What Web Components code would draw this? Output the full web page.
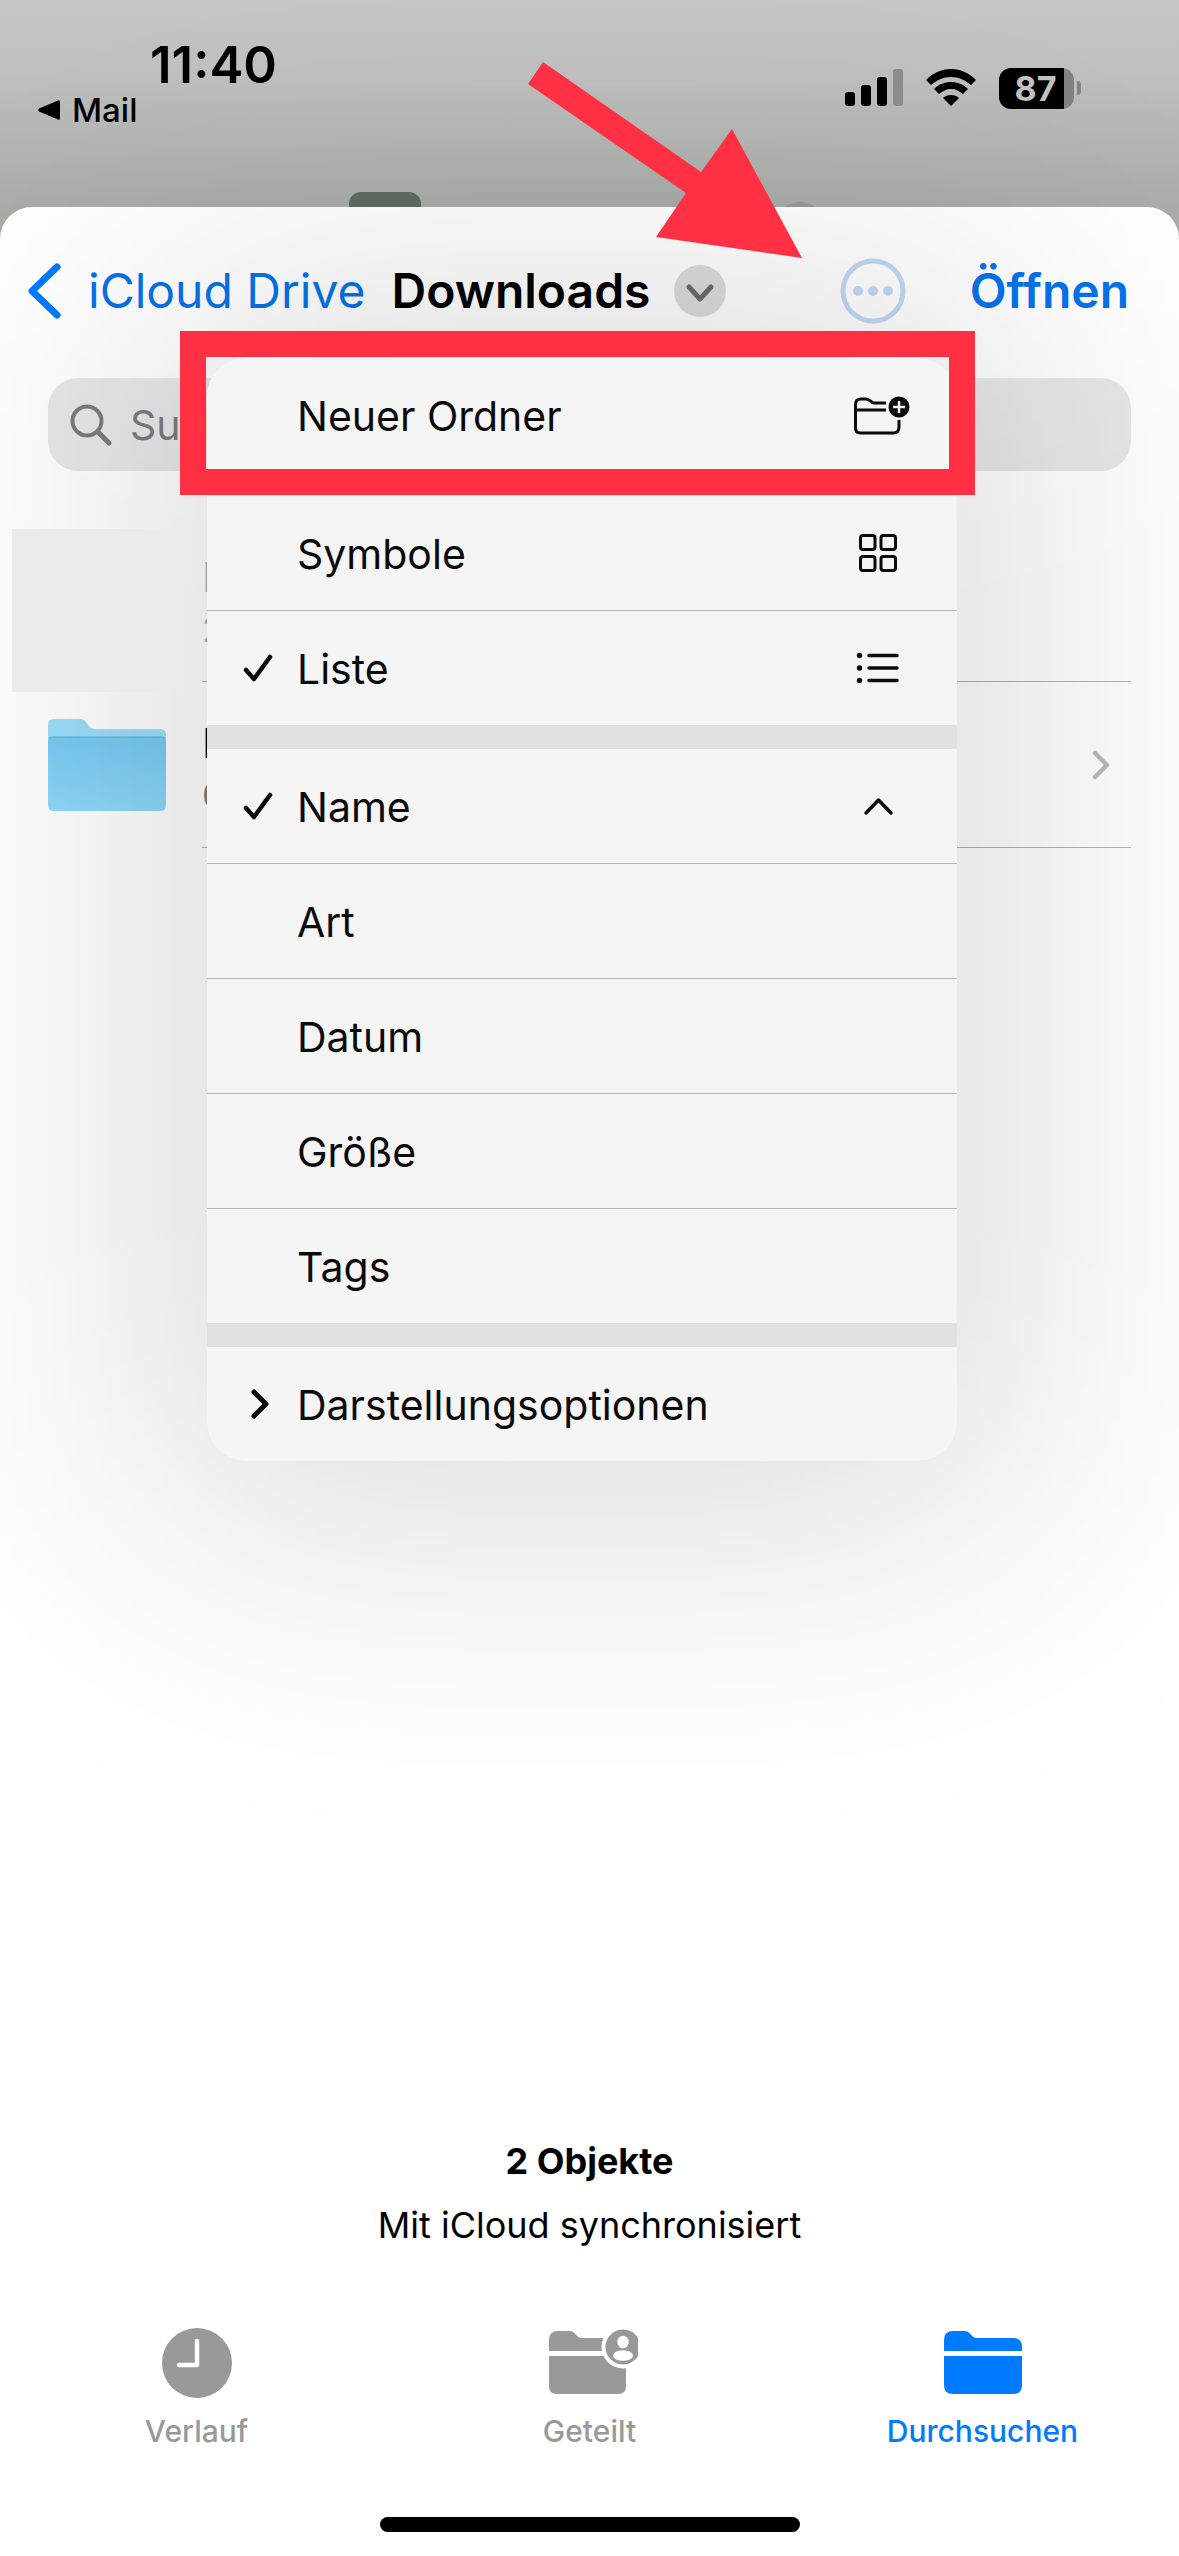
<!DOCTYPE html>
<html lang="de">
<head>
<meta charset="utf-8">
<meta name="viewport" content="width=device-width, initial-scale=1">
<title>Downloads</title>
<style>
  :root {
    --blue: #007aff;
    --link: #0573ea;
    --mark: #ff3044;
    --line: #b4b4b5;
    --gray: #999;
  }
  body { margin: 0; font-family: Inter, "Liberation Sans", sans-serif; color: #000; }
</style>
</head>
<body>
<files-screen></files-screen>

<script>
// Shared icon set, each one drawn in its own pixel grid.
const ICONS = {
  back: `<svg width="34" height="58" viewBox="0 0 34 58" fill="none" stroke="#007aff" stroke-width="7" stroke-linecap="round" stroke-linejoin="round"><path d="M29 5 4 29l25 24"/></svg>`,
  down: `<svg width="52" height="52" viewBox="0 0 52 52" fill="none"><circle cx="26" cy="26" r="26" fill="#dcdcdc"/><path d="M15 22l11 12 11-12" stroke="#6c6c6c" stroke-width="5" stroke-linecap="round" stroke-linejoin="round"/></svg>`,
  more: `<svg width="66" height="66" viewBox="0 0 66 66" fill="#c3d9f4"><circle cx="33" cy="33" r="30" fill="none" stroke="#c3d9f4" stroke-width="5"/><circle cx="18" cy="33" r="5"/><circle cx="33" cy="33" r="5"/><circle cx="48" cy="33" r="5"/></svg>`,
  search: `<svg width="42" height="42" viewBox="0 0 42 42" fill="none" stroke="#7c7c80" stroke-width="4" stroke-linecap="round"><circle cx="17" cy="17" r="14.5"/><path d="M28 28l11 11" stroke-width="5"/></svg>`,
  check: `<svg width="30" height="30" viewBox="0 0 30 30" fill="none" stroke="#0a0a0a" stroke-width="4.5" stroke-linecap="round" stroke-linejoin="round"><path d="M3 17l8 9L27 4"/></svg>`,
  right: `<svg width="30" height="34" viewBox="0 0 30 34" fill="none" stroke="#0a0a0a" stroke-width="5" stroke-linecap="round" stroke-linejoin="round"><path d="M11 5l12 12-12 12"/></svg>`,
  next: `<svg width="18" height="32" viewBox="0 0 18 32" fill="none" stroke="#bababb" stroke-width="4.5" stroke-linecap="round" stroke-linejoin="round"><path d="M3 4l12 12L3 28"/></svg>`,
  newFolder: `<svg width="62" height="42" viewBox="0 0 62 42" fill="none" stroke="#0a0a0a" stroke-width="3"><path d="M36 9H24c-3 0-4-4-8-4H11Q5.500 5 5.500 10.500V34q0 5 5 5H43q6 0 6-6V26"/><path d="M5 16H36"/><circle cx="49" cy="13" r="10.500" fill="#0a0a0a" stroke="none"/><path d="M49 7v12M43 13h12" stroke="#f5f5f5" stroke-width="2.500"/></svg>`,
  grid: `<svg width="62" height="42" viewBox="0 0 62 42" fill="none" stroke="#0a0a0a" stroke-width="3"><rect x="10.500" y="3.500" width="14.500" height="14" rx="2.500"/><rect x="31" y="3.500" width="14.500" height="14" rx="2.500"/><rect x="10.500" y="24.500" width="14.500" height="14" rx="2.500"/><rect x="31" y="24.500" width="14.500" height="14" rx="2.500"/></svg>`,
  list: `<svg width="62" height="42" viewBox="0 0 62 42" fill="#0a0a0a" stroke="#0a0a0a" stroke-width="3.500" stroke-linecap="round"><path d="M19 8.500h28M19 21h28M19 33.500h28"/><g stroke="none"><circle cx="9.500" cy="8.500" r="2.700"/><circle cx="9.500" cy="21" r="2.700"/><circle cx="9.500" cy="33.500" r="2.700"/></g></svg>`,
  up: `<svg width="62" height="42" viewBox="0 0 62 42" fill="none" stroke="#0a0a0a" stroke-width="3.500" stroke-linecap="round" stroke-linejoin="round"><path d="M16 28l12.500-13L41 28"/></svg>`,
  folder: `<svg width="118" height="92" viewBox="0 0 118 92">
    <defs><linearGradient id="f" x1="0" y1="0" x2="0" y2="1"><stop offset="0" stop-color="#76cbf3"/><stop offset="1" stop-color="#90d9fa"/></linearGradient></defs>
    <path d="M0 6q0-6 6-6h26c8 0 7 10 15 10h65q6 0 6 6v30H0z" fill="#9cdefa"/>
    <path d="M0 23q0-5 5-5h108q5 0 5 5v63q0 6-6 6H6q-6 0-6-6z" fill="url(#f)"/><path d="M1 19q2-1 4-1h108q2 0 4 1" fill="none" stroke="#6fbfe2" stroke-width="1.500"/></svg>`,
  clock: `<svg width="72" height="72" viewBox="0 0 72 72"><circle cx="36" cy="36" r="35" fill="#999"/><path d="M36 14v24H18" fill="none" stroke="#fff" stroke-width="4.500" stroke-linecap="round" stroke-linejoin="round"/></svg>`,
  shared: `<svg width="96" height="72" viewBox="0 0 96 72" fill="#999"><path d="M7 24V13q0-9 9-9h11c7 0 7 7 13 7h36q8 0 8 8v5z"/><path d="M7 29h77v30q0 8-8 8H15q-8 0-8-8z"/><circle cx="81" cy="20" r="21.500" fill="#fff"/><circle cx="81" cy="20" r="17.500"/><ellipse cx="81" cy="15" rx="5.700" ry="6.300" fill="#fff"/><ellipse cx="81" cy="28.500" rx="10" ry="5.300" fill="#fff"/></svg>`,
  browse: `<svg width="78" height="72" viewBox="0 0 78 72" fill="#007aff"><path d="M0 24V13q0-9 9-9h11c7 0 7 7 13 7h36q9 0 9 9v4z"/><path d="M0 29h78v29q0 9-9 9H9q-9 0-9-9z"/></svg>`,
  signal: `<svg width="58" height="42" viewBox="0 0 58 42"><rect y="25" width="10" height="14" rx="3"/><rect x="16" y="18" width="10" height="21" rx="3"/><rect x="32" y="10" width="10" height="29" rx="3"/><rect x="48" y="2" width="10" height="37" rx="3" fill="#8e8f8d"/></svg>`,
  wifi: `<svg width="52" height="42" viewBox="0 0 52 42"><path d="M26 2c10 0 18 4 25 11l-5 5c-6-5-12-8-20-8S12 13 6 18l-5-5C8 6 16 2 26 2z"/><path d="M26 15c6 0 12 2 17 7l-5 5c-4-3-7-5-12-5s-8 2-12 5l-5-5c5-5 11-7 17-7z"/><path d="M26 28c3 0 6 1 8 3l-8 8-8-8c2-2 5-3 8-3z"/></svg>`,
};

function define(tag, render) {
  customElements.define(tag, class extends HTMLElement {
    connectedCallback() {
      if (this.shadowRoot) return;
      this.attachShadow({ mode: "open" }).innerHTML = `
        <style>
          *, *::before, *::after { box-sizing: border-box; }
          svg { display: block; flex: none; }
          button, input { font: inherit; color: inherit; background: none; border: 0; padding: 0; margin: 0; }
        </style>
        ${render(this)}`;
    }
  });
}

define("status-bar", () => `
  <style>
    :host {
      display: flex; justify-content: space-between; position: relative; height: 207px; overflow: hidden;
      background: linear-gradient(#c6c6c6, #bfc0bf 35%, #a9aca7);
    }
    .left { padding-top: 38px; }
    time { display: block; padding-left: 150px; font-size: 51px; line-height: 54px; font-weight: 600; }
    a {
      display: flex; align-items: center; gap: 12px; padding-left: 38px;
      font-size: 33px; line-height: 36px; font-weight: 500; color: inherit; text-decoration: none;
    }
    .right { display: flex; align-items: center; gap: 22px; height: 42px; margin: 67px 98px 0 0; }
    .battery { display: flex; align-items: center; gap: 3px; }
    .level {
      width: 75px; height: 41px; border-radius: 12px; text-align: center;
      background: linear-gradient(90deg, #000 65px, #838482 65px);
      color: #c2c3c1; font-size: 34px; line-height: 41px; font-weight: 700;
      padding-right: 2px;
    }
    .nub { width: 4px; height: 14px; border-radius: 0 4px 4px 0; background: #838482; }
    /* things of the page below that peek out over the sheet */
    .peek { position: absolute; }
    .tile { left: 349px; top: 192px; width: 72px; height: 30px; border-radius: 12px; background: #5f6c60; }
    .disc { left: 774px; top: 202px; width: 52px; height: 52px; border-radius: 50%; background: #999b97; }
  </style>
  <div class="left">
    <time>11:40</time>
    <a href="#mail"><svg width="22" height="22" viewBox="0 0 22 22"><path d="M20 1.500q2-1 2 1.500v16q0 2.500-2 1.500L1 12.500q-1.500-1.500 0-3z"/></svg>Mail</a>
  </div>
  <div class="right">
    ${ICONS.signal}${ICONS.wifi}
    <div class="battery"><div class="level">87</div><div class="nub"></div></div>
  </div>
  <div class="peek tile"></div><div class="peek disc"></div>
`);

define("sheet-nav", () => `
  <style>
    :host { display: flex; align-items: center; height: 168px; padding: 0 50px 0 28px; font-size: 48px; line-height: 60px; }
    .back { display: flex; align-items: center; gap: 26px; color: var(--link); }
    .title { display: flex; align-items: center; gap: 24px; margin-left: 26px; font-weight: 600; }
    .more { margin-left: auto; }
    .open { margin-left: 64px; font-weight: 600; color: var(--link); }
  </style>
  <button class="back">${ICONS.back}<span>iCloud Drive</span></button>
  <button class="title"><span>Downloads</span>${ICONS.down}</button>
  <button class="more" aria-label="Mehr">${ICONS.more}</button>
  <button class="open">Öffnen</button>
`);

define("search-field", () => `
  <style>
    :host { display: block; margin: 3px 48px 0; }
    label {
      display: flex; align-items: center; gap: 18px; height: 93px; padding: 0 22px;
      border-radius: 30px; background: #e8e8ea;
    }
    input { flex: 1; min-width: 0; font-size: 41px; line-height: 52px; outline: 0; }
    input::placeholder { color: #7c7c80; opacity: 1; }
  </style>
  <label>${ICONS.search}<input type="search" placeholder="Suchen" aria-label="Suchen"></label>
`);

define("file-row", (el) => `
  <style>
    :host { display: flex; align-items: center; height: 166px; padding: 0 48px; }
    .thumb { width: 118px; }
    .body {
      flex: 1; align-self: stretch; display: flex; align-items: center; justify-content: space-between;
      margin-left: 36px; padding-right: 21px; border-bottom: 1px solid var(--line);
    }
    .label { padding-top: 8px; }
    .name { font-size: 41px; line-height: 52px; }
    .meta { font-size: 36px; line-height: 52px; color: #7c7c80; }
    :host([dim]) .name, :host([dim]) .meta { color: #b0b0b0; }
  </style>
  <div class="thumb">${el.hasAttribute("folder") ? ICONS.folder : ""}</div>
  <div class="body">
    <div class="label"><div class="name"><slot></slot></div><div class="meta"><slot name="meta"></slot></div></div>
    ${el.hasAttribute("folder") ? ICONS.next : ""}
  </div>
`);

define("context-menu", () => `
  <style>
    :host { display: block; }
    /* a blurred slab instead of box-shadow, which bands at this radius */
    .shade { position: absolute; inset: -60px; border-radius: 80px; background: rgba(0, 0, 0, .14); filter: blur(150px); pointer-events: none; }
    .panel {
      display: flex; flex-direction: column; gap: 24px; position: relative; overflow: hidden;
      border-radius: 38px; background: #e0e0e0;
    }
  </style>
  <div class="shade"></div>
  <div class="panel"><slot></slot></div>
`);

define("menu-group", () => `
  <style>
    :host { display: flex; flex-direction: column; gap: 1px; background: var(--line); }
  </style>
  <slot></slot>
`);

define("menu-item", (el) => `
  <style>
    :host { display: block; background: #f5f5f5; }
    button { display: flex; align-items: center; width: 100%; height: 114px; padding: 0 45px 0 36px; text-align: left; }
    .lead { width: 54px; }
    .text { flex: 1; padding-top: 2px; font-size: 41px; line-height: 52px; color: #0a0a0a; }
  </style>
  <button role="menuitem">
    <span class="lead">${ICONS[el.getAttribute("lead")] || ""}</span>
    <span class="text"><slot></slot></span>
    ${ICONS[el.getAttribute("icon")] || ""}
  </button>
`);

define("tab-item", (el) => `
  <style>
    :host { flex: 1; display: block; color: var(--gray); }
    :host([active]) { color: var(--blue); }
    a {
      display: flex; flex-direction: column; align-items: center; gap: 14px;
      color: inherit; text-decoration: none; font-size: 30px; line-height: 36px; font-weight: 500;
    }
  </style>
  <a href="#${el.getAttribute("icon")}">${ICONS[el.getAttribute("icon")]}<slot></slot></a>
`);

define("files-screen", () => `
  <style>
    :host { display: flex; flex-direction: column; min-height: 100vh; position: relative; overflow: hidden; background: #a9aca7; }
    main { flex: 1; display: flex; flex-direction: column; position: relative; background: #fff; border-radius: 32px 32px 0 0; }
    .files { margin-top: 45px; position: relative; }
    .redacted {
      position: absolute; left: 12px; top: 13px; width: 188px; height: 163px; z-index: 2;
      background: linear-gradient(90deg, #ebebeb 75%, transparent);
    }
    .menu { position: absolute; right: 222px; top: 151px; width: 750px; z-index: 1; }
    .summary { margin-top: auto; text-align: center; font-size: 36px; line-height: 64px; }
    .summary strong { font-weight: 700; }
    nav { display: flex; margin-top: 70px; }
    .home { width: 420px; height: 15px; border-radius: 8px; background: #000; margin: 68px auto 24px; }
    /* hand-drawn markup over the screen */
    .frame { position: absolute; right: 204px; top: 331px; width: 795px; height: 164px; border: 26px solid var(--mark); z-index: 3; }
    .arrow { position: absolute; right: 376px; top: 60px; z-index: 3; }
  </style>
  <status-bar></status-bar>
  <main>
    <sheet-nav></sheet-nav>
    <search-field></search-field>
    <div class="files">
      <file-row dim>I<span slot="meta">2</span></file-row>
      <file-row folder>I<span slot="meta">0</span></file-row>
      <div class="redacted"></div>
    </div>
    <context-menu class="menu" role="menu">
      <menu-group><menu-item icon="newFolder">Neuer Ordner</menu-item></menu-group>
      <menu-group>
        <menu-item icon="grid">Symbole</menu-item>
        <menu-item lead="check" icon="list">Liste</menu-item>
      </menu-group>
      <menu-group>
        <menu-item lead="check" icon="up">Name</menu-item>
        <menu-item>Art</menu-item>
        <menu-item>Datum</menu-item>
        <menu-item>Größe</menu-item>
        <menu-item>Tags</menu-item>
      </menu-group>
      <menu-group><menu-item lead="right">Darstellungsoptionen</menu-item></menu-group>
    </context-menu>
    <div class="summary"><strong>2 Objekte</strong><div>Mit iCloud synchronisiert</div></div>
    <nav>
      <tab-item icon="clock">Verlauf</tab-item>
      <tab-item icon="shared">Geteilt</tab-item>
      <tab-item icon="browse" active>Durchsuchen</tab-item>
    </nav>
    <div class="home"></div>
  </main>
  <div class="frame"></div>
  <svg class="arrow" width="276" height="200" viewBox="527 60 276 200" fill="#ff3044"><path d="M543 62l158 110 31-43 70 129-146-21 30-44L528 84z"/></svg>
`);
</script>
</body>
</html>
